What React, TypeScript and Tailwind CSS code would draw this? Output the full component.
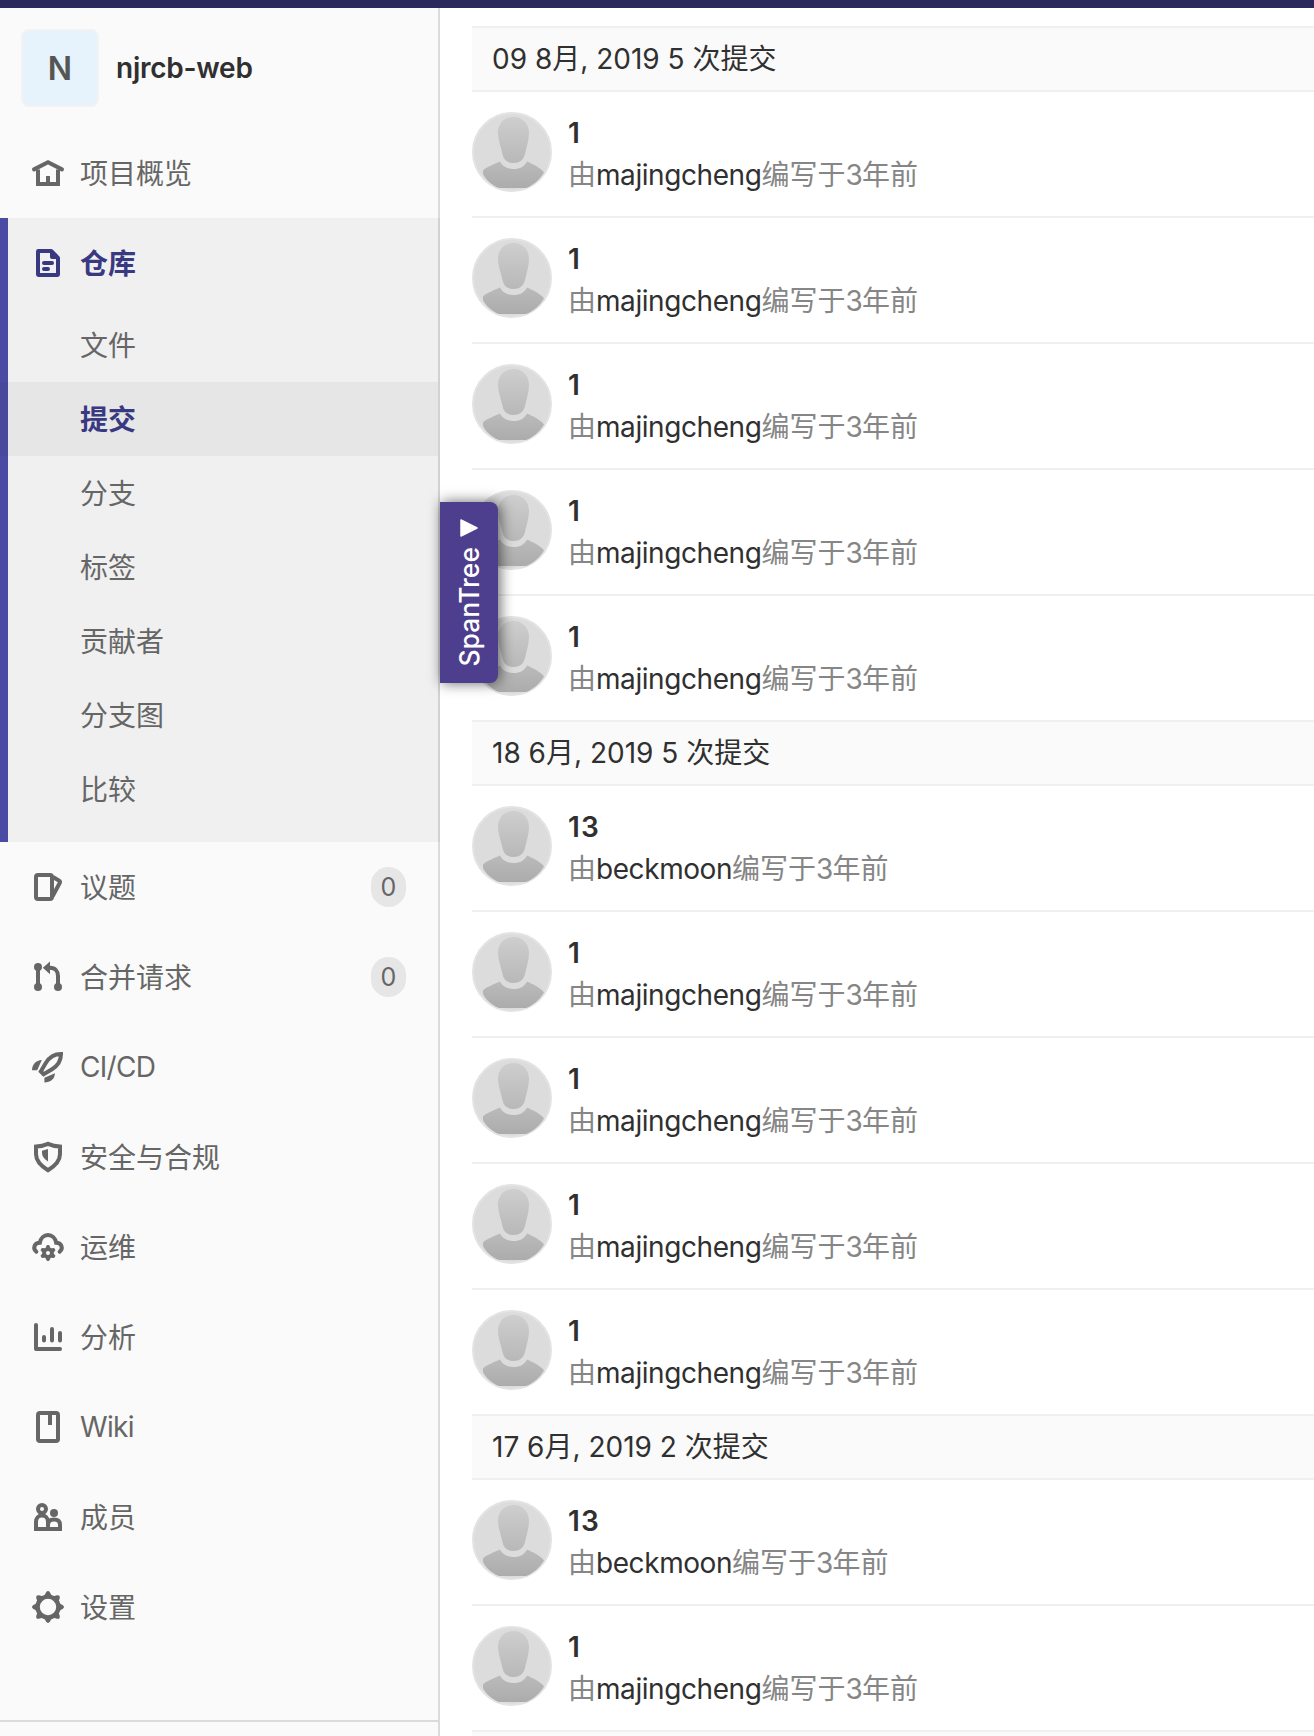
import type { ReactNode } from "react";

interface Commit {
  title: string;
  author: string;
}

interface CommitGroup {
  date: string;
  commits: Commit[];
}

interface NavItem {
  label: string;
  icon: ReactNode;
  count?: number;
  latin?: boolean;
}

const MA: Commit = { title: "1", author: "majingcheng" };
const BECK: Commit = { title: "13", author: "beckmoon" };

const GROUPS: CommitGroup[] = [
  { date: "09 8月, 2019 5 次提交", commits: [MA, MA, MA, MA, MA] },
  { date: "18 6月, 2019 5 次提交", commits: [BECK, MA, MA, MA, MA] },
  { date: "17 6月, 2019 2 次提交", commits: [BECK, MA] },
];

const REPO_LINKS = ["文件", "提交", "分支", "标签", "贡献者", "分支图", "比较"];
const ACTIVE_LINK = "提交";

function Icon({ children }: { children: ReactNode }) {
  return (
    <svg viewBox="0 0 16 16" fill="none" stroke="currentColor" strokeWidth="2" className="size-8 shrink-0 overflow-visible">
      {children}
    </svg>
  );
}

const homeIcon = (
  <Icon>
    <path d="M3 6.2V13.5H13V6.2" />
    <path d="M1 6.2L8 2.6L15 6.2" strokeLinecap="round" />
    <path d="M8 9.5V14" />
  </Icon>
);

const docIcon = (
  <Icon>
    <path d="M3.2 2H9.6L13 5.4V13.8a.2 .2 0 0 1-.2 .2H3.2a.2 .2 0 0 1-.2-.2V2.2a.2 .2 0 0 1 .2-.2z" strokeLinejoin="round" />
    <path d="M9 1.5V5a1 1 0 0 0 1 1h3.5V5L10 1.5z" fill="currentColor" stroke="none" />
    <path d="M6 8H10M6 11H8" strokeLinecap="round" />
  </Icon>
);

const NAV: NavItem[] = [
  {
    label: "议题",
    count: 0,
    icon: (
      <Icon>
        <rect x="2" y="2" width="8" height="12" rx="1" />
        <path d="M10.5 3L13.6 4.9a.8 .8 0 0 1 .3 1L10.3 12.6" />
      </Icon>
    ),
  },
  {
    label: "合并请求",
    count: 0,
    icon: (
      <Icon>
        <path d="M3 3V13M13 13V7.5C13 5 11.5 3.4 9 3.4" />
        <g fill="currentColor" stroke="none">
          <circle cx="3" cy="3" r="2" />
          <circle cx="3" cy="13" r="2" />
          <circle cx="13" cy="13" r="2" />
          <path d="M9 .2V6.6L5.4 3.4z" />
        </g>
      </Icon>
    ),
  },
  {
    label: "CI/CD",
    latin: true,
    icon: (
      <Icon>
        <path d="M14.5 1.5C11.3 1.5 8.6 3.2 6.9 6L4.4 10.2L5.8 11.6L10 9.1C12.8 7.4 14.5 4.7 14.5 1.5z" />
        <path d="M4.9 4.5C2 4.8 .1 6.5 0 9.6H2.6zM11.5 11.1C11.2 14 9.5 15.7 6.2 15.7V13.4z" fill="currentColor" stroke="none" />
      </Icon>
    ),
  },
  {
    label: "安全与合规",
    icon: (
      <Icon>
        <path d="M8 1.4C6.2 2.2 4.2 2.7 2 2.8V6.5C2 10 4.2 12.3 8 14.6C11.8 12.3 14 10 14 6.5V2.8C11.8 2.7 9.8 2.2 8 1.4z" />
        <path d="M8 4V10.2C6 8.8 5 7.7 5 6V4.9z" fill="currentColor" stroke="none" />
      </Icon>
    ),
  },
  {
    label: "运维",
    icon: (
      <Icon>
        <path d="M2.2 10.4C.3 8.8 1 6 3.9 5.9C4.3 3.6 6 2 8 2C10 2 11.7 3.6 12.1 5.9C15 6 15.7 8.8 13.8 10.4" strokeLinecap="round" />
        <circle cx="8" cy="11" r="1.9" strokeWidth="1.8" />
        {[0, 60, 120, 180, 240, 300].map((a) => (
          <path key={a} d="M6.9 8.9L7.5 7.3H8.5L9.1 8.9z" fill="currentColor" strokeWidth=".5" transform={`rotate(${a} 8 11)`} />
        ))}
      </Icon>
    ),
  },
  {
    label: "分析",
    icon: (
      <Icon>
        <path d="M2 2V14H14M6 8V9.8M10 4V9.8M14 6V9.8" strokeLinecap="round" strokeLinejoin="round" />
      </Icon>
    ),
  },
  {
    label: "Wiki",
    latin: true,
    icon: (
      <Icon>
        <rect x="3" y="1" width="10" height="14" rx="1" />
        <path d="M9 1V7" />
      </Icon>
    ),
  },
  {
    label: "成员",
    icon: (
      <Icon>
        <circle cx="5" cy="4" r="2" />
        <circle cx="11" cy="6" r="2" fill="currentColor" stroke="none" />
        <path d="M2 14V10.5C2 8.5 3.2 7.3 5 7.3C6.8 7.3 8 8.5 8 10.5V14z" />
        <path d="M8 14V12C8 10.2 9.2 9.3 11 9.3C12.8 9.3 14 10.2 14 12V14z" />
      </Icon>
    ),
  },
  {
    label: "设置",
    icon: (
      <Icon>
        <circle cx="8" cy="8" r="5.2" strokeWidth="2.2" />
        {[0, 45, 90, 135, 180, 225, 270, 315].map((a) => (
          <path key={a} d="M6 2.6L7 .7Q8-.7 9 .7L10 2.6z" fill="currentColor" stroke="none" transform={`rotate(${a} 8 8)`} />
        ))}
      </Icon>
    ),
  },
];

function Avatar() {
  return (
    <svg viewBox="0 0 80 80" className="size-20 shrink-0">
      <defs>
        <linearGradient id="head" x1="0" y1="0" x2="0" y2="1">
          <stop offset="0" stopColor="#cecece" />
          <stop offset="1" stopColor="#b8b8b8" />
        </linearGradient>
        <linearGradient id="body" x1="0" y1="0" x2="0" y2="1">
          <stop offset="0" stopColor="#bababa" />
          <stop offset="1" stopColor="#acacac" />
        </linearGradient>
      </defs>
      <circle cx="40" cy="40" r="39" fill="#dcdcdc" stroke="#e3e3e3" strokeWidth="2" />
      <path d="M41.5 5C51 5 57 12 57 21C57 28 54.5 35 53 42C51.5 48 47.5 51 41.5 51C35.5 51 31.5 48 30.5 42C29 35 26 28 26 21C26 12 32 5 41.5 5z" fill="url(#head)" />
      <path d="M28 49.5C30.5 54.5 35 57 41.5 57C48 57 52.5 54.5 55 49.5C61 52.5 68 55 72 60.5C68 67.5 61 73.5 54 76H27C20 73.5 14 68 11 62V58.5C15 54.5 22 52.5 28 49.5z" fill="url(#body)" />
    </svg>
  );
}

function CommitRow({ commit }: { commit: Commit }) {
  return (
    <li className="flex h-[126px] border-b-2 border-[#f0f0f0] pt-5 last:h-[124px] last:border-b-0">
      <Avatar />
      <div className="ml-4">
        <p className="text-[28px] leading-[42px] font-semibold tracking-[1.2px] text-[#303030]">{commit.title}</p>
        <p className="text-[28px] leading-[42px] whitespace-nowrap text-[#868686]">
          由<span className="tracking-[-0.43px] text-[#303030]">{commit.author}</span>编写于
          <span className="tracking-[-0.8px]">3</span>年前
        </p>
      </div>
    </li>
  );
}

function Sidebar() {
  return (
    <aside className="flex w-[440px] shrink-0 flex-col border-r-2 border-[#dbdbdb] bg-[#fafafa] text-[28px] text-[#666666]">
      <div className="flex h-[120px] items-center pl-[21px]">
        <div className="flex size-[78px] items-center justify-center rounded-lg border-2 border-[#f2f2f2] bg-[#e6f3fc] pt-px text-[32px] font-semibold text-[#555555]">
          N
        </div>
        <span className="ml-[17px] text-[28px] font-semibold tracking-[-0.25px] text-[#303030]">njrcb-web</span>
      </div>

      <a className="flex h-[90px] items-center gap-4 pl-8">
        {homeIcon}
        <span className="pt-px">项目概览</span>
      </a>

      <div className="-mr-0.5 border-r-2 border-[#d2d2d2] bg-[#f0f0f0] pb-4 shadow-[inset_8px_0_0_#4b4ba3]">
        <a className="flex h-[90px] items-center gap-4 pl-8 font-semibold text-[#393982]">
          {docIcon}
          <span className="pt-px">仓库</span>
        </a>
        {REPO_LINKS.map((label) => (
          <a
            key={label}
            className={
              label === ACTIVE_LINK
                ? "flex h-[74px] items-center bg-black/4 pt-px pl-20 font-semibold text-[#393982]"
                : "flex h-[74px] items-center pt-px pl-20"
            }
          >
            {label}
          </a>
        ))}
      </div>

      {NAV.map((item) => (
        <a key={item.label} className="flex h-[90px] items-center gap-4 pr-8 pl-8">
          {item.icon}
          <span className={item.latin ? "flex-1 tracking-[-0.7px]" : "flex-1 pt-px"}>{item.label}</span>
          {item.count !== undefined && (
            <span className="flex h-10 w-[35px] items-center justify-center rounded-[20px] bg-[#e6e6e6] pt-px text-[25px]">
              {item.count}
            </span>
          )}
        </a>
      ))}

      <div className="mt-auto h-4 border-t-2 border-[#dbdbdb]" />
    </aside>
  );
}

export default function App() {
  return (
    <div className="relative flex h-[1736px] w-[1314px] flex-col overflow-hidden bg-white font-['Inter','Noto_Sans_CJK_SC',sans-serif]">
      <header className="h-2 shrink-0 bg-[#29295c]" />
      <div className="flex min-h-0 flex-1">
        <Sidebar />
        <main className="min-w-0 flex-1 pt-[18px] pl-8">
          {GROUPS.map((group) => (
            <section key={group.date}>
              <h2 className="h-[66px] border-y-2 border-[#f0f0f0] bg-[#fafafa] pl-5 text-[28px] leading-[62px] text-[#303030]">
                {group.date}
              </h2>
              <ul>
                {group.commits.map((commit, i) => (
                  <CommitRow key={i} commit={commit} />
                ))}
              </ul>
            </section>
          ))}
          <div className="h-[66px] border-y-2 border-[#f0f0f0] bg-[#fafafa]" />
        </main>
      </div>

      {/* SpanTree drawer handle */}
      <button className="absolute top-[502px] left-[440px] flex h-[181px] w-[58px] flex-col items-center rounded-r-lg bg-[#4d3f8d] pt-[17px] text-[26.5px] text-white shadow-[2px_0_14px_rgba(0,0,0,0.6)]">
        <svg viewBox="0 0 18 18" className="size-[18px] shrink-0">
          <path d="M1 1L17 9L1 17z" fill="currentColor" stroke="currentColor" strokeWidth="1.5" strokeLinejoin="round" />
        </svg>
        <span className="mt-[10px] rotate-180 leading-8 font-medium [writing-mode:vertical-rl]">SpanTree</span>
      </button>
    </div>
  );
}
